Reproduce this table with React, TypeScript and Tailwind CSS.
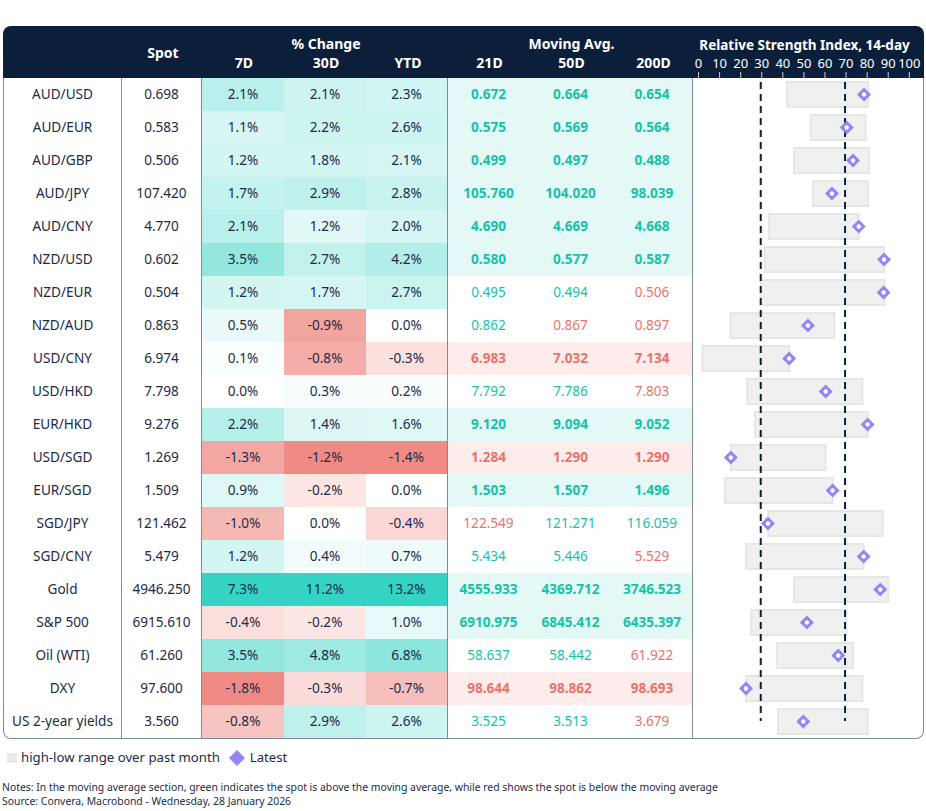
import React from 'react'

type Row = {
  name: string
  spot: string
  chg: number[]
  ma: string[]
  rsi: number[] // low, high, latest
}

const rows: Row[] = [
  { name: 'AUD/USD', spot: '0.698', chg: [2.1, 2.1, 2.3], ma: ['0.672', '0.664', '0.654'], rsi: [42.5, 80.9, 79.0] },
  { name: 'AUD/EUR', spot: '0.583', chg: [1.1, 2.2, 2.6], ma: ['0.575', '0.569', '0.564'], rsi: [53.7, 79.8, 70.8] },
  { name: 'AUD/GBP', spot: '0.506', chg: [1.2, 1.8, 2.1], ma: ['0.499', '0.497', '0.488'], rsi: [45.8, 81.4, 73.8] },
  { name: 'AUD/JPY', spot: '107.420', chg: [1.7, 2.9, 2.8], ma: ['105.760', '104.020', '98.039'], rsi: [54.8, 80.9, 63.8] },
  { name: 'AUD/CNY', spot: '4.770', chg: [2.1, 1.2, 2.0], ma: ['4.690', '4.669', '4.668'], rsi: [33.9, 76.5, 76.5] },
  { name: 'NZD/USD', spot: '0.602', chg: [3.5, 2.7, 4.2], ma: ['0.580', '0.577', '0.587'], rsi: [31.9, 88.5, 88.5] },
  { name: 'NZD/EUR', spot: '0.504', chg: [1.2, 1.7, 2.7], ma: ['0.495', '0.494', '0.506'], rsi: [30.0, 88.8, 88.3] },
  { name: 'NZD/AUD', spot: '0.863', chg: [0.5, -0.9, 0.0], ma: ['0.862', '0.867', '0.897'], rsi: [15.6, 64.9, 52.4] },
  { name: 'USD/CNY', spot: '6.974', chg: [0.1, -0.8, -0.3], ma: ['6.983', '7.032', '7.134'], rsi: [2.3, 43.5, 43.5] },
  { name: 'USD/HKD', spot: '7.798', chg: [0.0, 0.3, 0.2], ma: ['7.792', '7.786', '7.803'], rsi: [23.6, 78.2, 60.8] },
  { name: 'EUR/HKD', spot: '9.276', chg: [2.2, 1.4, 1.6], ma: ['9.120', '9.094', '9.052'], rsi: [27.3, 80.7, 80.7] },
  { name: 'USD/SGD', spot: '1.269', chg: [-1.3, -1.2, -1.4], ma: ['1.284', '1.290', '1.290'], rsi: [15.9, 60.8, 15.8] },
  { name: 'EUR/SGD', spot: '1.509', chg: [0.9, -0.2, 0.0], ma: ['1.503', '1.507', '1.496'], rsi: [13.0, 64.1, 64.1] },
  { name: 'SGD/JPY', spot: '121.462', chg: [-1.0, 0.0, -0.4], ma: ['122.549', '121.271', '116.059'], rsi: [33.6, 87.9, 33.4] },
  { name: 'SGD/CNY', spot: '5.479', chg: [1.2, 0.4, 0.7], ma: ['5.434', '5.446', '5.529'], rsi: [23.1, 78.8, 78.8] },
  { name: 'Gold', spot: '4946.250', chg: [7.3, 11.2, 13.2], ma: ['4555.933', '4369.712', '3746.523'], rsi: [45.8, 90.5, 86.7] },
  { name: 'S&P 500', spot: '6915.610', chg: [-0.4, -0.2, 1.0], ma: ['6910.975', '6845.412', '6435.397'], rsi: [25.5, 70.6, 51.9] },
  { name: 'Oil (WTI)', spot: '61.260', chg: [3.5, 4.8, 6.8], ma: ['58.637', '58.442', '61.922'], rsi: [37.6, 73.8, 66.8] },
  { name: 'DXY', spot: '97.600', chg: [-1.8, -0.3, -0.7], ma: ['98.644', '98.862', '98.693'], rsi: [23.0, 78.2, 23.0] },
  { name: 'US 2-year yields', spot: '3.560', chg: [-0.8, 2.9, 2.6], ma: ['3.525', '3.513', '3.679'], rsi: [38.2, 80.7, 50.2] },
]

const ROW_H = 33
const RSI_W = 229
const rx = (v: number) => 4.5 + 2.108 * v

// heat colour per column, scaled to that column's max / min
const colMax = [0, 1, 2].map((i) => Math.max(...rows.map((r) => r.chg[i])))
const colMin = [0, 1, 2].map((i) => Math.min(...rows.map((r) => r.chg[i])))

function heat(v: number, col: number) {
  const mix = (to: number[], t: number) => {
    const k = Math.pow(Math.min(1, Math.max(0, t)), 0.85)
    const c = to.map((x) => Math.round(255 + (x - 255) * k))
    return `rgb(${c[0]},${c[1]},${c[2]})`
  }
  if (v > 0) return mix([53, 211, 196], v / colMax[col])
  if (v < 0) return mix([239, 139, 132], v / colMin[col])
  return '#ffffff'
}

const maCols = ['w-[81px]', 'w-[83px]', 'w-[81px] border-r border-[#7d8a98]']
const chgCols = ['w-[82px]', 'w-[82px]', 'w-[82px] border-r border-[#7d8a98]']

function RsiChart() {
  const h = rows.length * ROW_H
  return (
    <svg width={RSI_W} height={h} className="block">
      {rows.map((r, i) => (
        <rect
          key={r.name}
          x={rx(r.rsi[0])}
          y={i * ROW_H + 4}
          width={rx(r.rsi[1]) - rx(r.rsi[0])}
          height={25}
          fill="#f0f0f0"
          stroke="#e6e6e6"
          strokeWidth={2}
        />
      ))}
      <line x1={rx(30)} x2={rx(30)} y1={4} y2={h - 17} stroke="#0b1f3a" strokeWidth={2} strokeDasharray="7 5" />
      <line x1={rx(70)} x2={rx(70)} y1={4} y2={h - 17} stroke="#0b1f3a" strokeWidth={2} strokeDasharray="7 5" />
      {rows.map((r, i) => {
        const cx = rx(r.rsi[2])
        const cy = i * ROW_H + 16.5
        return (
          <g key={r.name + 'd'}>
            <polygon points={`${cx},${cy - 7} ${cx + 7},${cy} ${cx},${cy + 7} ${cx - 7},${cy}`} fill="#9485f4" />
            <circle cx={cx} cy={cy} r={2.2} fill="#ffffff" />
          </g>
        )
      })}
    </svg>
  )
}

function RsiAxis() {
  const ticks = [0, 10, 20, 30, 40, 50, 60, 70, 80, 90, 100]
  return (
    <svg width={RSI_W} height={24} className="block font-normal">
      {ticks.map((t) => (
        <g key={t}>
          <text x={rx(t)} y={14} textAnchor="middle" fill="#ffffff" fontSize={13} fontWeight={400} fontFamily="Noto Sans, sans-serif">
            {t}
          </text>
          <line x1={rx(t)} x2={rx(t)} y1={18} y2={24} stroke="#c9ced6" strokeWidth={1} />
        </g>
      ))}
    </svg>
  )
}

export default function App() {
  return (
    <div className="w-[926px] h-[811px] bg-white font-['Noto_Sans',sans-serif] text-[#1b2b48] overflow-hidden">
      <div className="ml-[3px] pt-[26px] w-[921px]">
        {/* header */}
        <div className="flex h-[52px] bg-[#0b1f3a] rounded-t-[8px] px-px text-white font-bold text-[14px]">
          <div className="w-[119px]" />
          <div className="w-[80px] flex items-center justify-center">Spot</div>
          <div className="w-[246px] flex flex-col pt-[8px]">
            <div className="h-[19px] leading-[19px] text-center">% Change</div>
            <div className="flex h-[19px] leading-[19px] text-center">
              <div className="w-[82px]">7D</div>
              <div className="w-[82px]">30D</div>
              <div className="w-[82px]">YTD</div>
            </div>
          </div>
          <div className="w-[245px] flex flex-col pt-[8px]">
            <div className="h-[19px] leading-[19px] text-center">Moving Avg.</div>
            <div className="flex h-[19px] leading-[19px] text-center">
              <div className="w-[81px]">21D</div>
              <div className="w-[83px]">50D</div>
              <div className="w-[81px]">200D</div>
            </div>
          </div>
          <div className="w-[229px] flex flex-col pt-[10px]">
            <div className="h-[18px] leading-[18px] text-center text-[13.5px] pr-[8px] whitespace-nowrap">Relative Strength Index, 14-day</div>
            <RsiAxis />
          </div>
        </div>

        {/* body */}
        <div className="flex border border-t-0 border-[#7d8a98] rounded-b-[8px] overflow-hidden text-[13.6px]">
          <div className="flex flex-col">
            {rows.map((r) => {
              const spot = parseFloat(r.spot)
              const up = r.ma.map((m) => spot > parseFloat(m))
              const allUp = up.every(Boolean)
              const allDown = up.every((u) => !u)
              const strong = allUp || allDown
              const maBg = allUp ? 'bg-[#e4f8f5]' : allDown ? 'bg-[#fcedec]' : 'bg-white'
              return (
                <div key={r.name} className="flex h-[33px]">
                  <div className="w-[118px] border-r border-[#7d8a98] flex items-center justify-center whitespace-nowrap">{r.name}</div>
                  <div className="w-[80px] border-r border-[#7d8a98] flex items-center justify-center">{r.spot}</div>
                  {r.chg.map((c, i) => (
                    <div
                      key={i}
                      className={`${chgCols[i]} flex items-center justify-center`}
                      style={{ backgroundColor: heat(c, i) }}
                    >
                      {c.toFixed(1)}%
                    </div>
                  ))}
                  {r.ma.map((m, i) => (
                    <div
                      key={i}
                      className={`${maCols[i]} ${maBg} flex items-center justify-center ${strong ? 'font-bold' : ''} ${up[i] ? 'text-[#17c2a9]' : 'text-[#e9736b]'}`}
                    >
                      {m}
                    </div>
                  ))}
                </div>
              )
            })}
          </div>
          <RsiChart />
        </div>

        {/* legend */}
        <div className="flex items-center h-[20px] mt-[9px] pl-[4px] text-[13.2px]">
          <span className="w-[10px] h-[10px] bg-[#e9e9e9] mr-[4px]" />
          <span>high-low range over past month</span>
          <svg width={18} height={18} className="ml-[8px] mr-[4px]">
            <polygon points="9,1 17,9 9,17 1,9" fill="#9485f4" />
          </svg>
          <span>Latest</span>
        </div>

        {/* notes */}
        <div className="mt-[12px] text-[10.4px] leading-[14px] text-[#1b2b48] -ml-px">
          <div>Notes: In the moving average section, green indicates the spot is above the moving average, while red shows the spot is below the moving average</div>
          <div>Source: Convera, Macrobond - Wednesday, 28 January 2026</div>
        </div>
      </div>
    </div>
  )
}
